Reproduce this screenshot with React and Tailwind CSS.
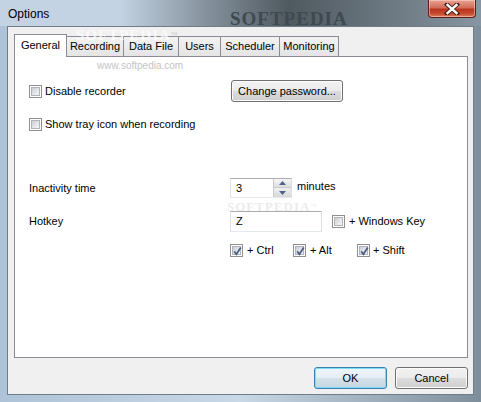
import React from "react";

const font = { fontFamily: '"Liberation Sans", Arial, sans-serif' };
const serif = { fontFamily: '"Liberation Serif", serif' };

function Check({ checked }) {
  return (
    <span className="relative flex h-[13px] w-[13px] shrink-0 items-center justify-center border border-[#8f8f8f] bg-white">
      <span className="h-[9px] w-[9px] border border-[#b0b4ba] bg-[linear-gradient(135deg,#c9ced5_0%,#e6e8eb_60%,#f7f7f7_100%)]" />
      {checked && (
        <svg className="absolute left-[1px] top-[1px]" width="11" height="11" viewBox="0 0 11 11">
          <path d="M2.2 5.4 L4.4 8.2 L8.8 1.6" fill="none" stroke="#4a5d86" strokeWidth="1.8" />
        </svg>
      )}
    </span>
  );
}

function CheckLabel({ checked, children, className = "" }) {
  return (
    <div className={"flex items-center gap-[3px] " + className}>
      <Check checked={checked} />
      <span className="text-[11px] leading-[13px] text-black">{children}</span>
    </div>
  );
}

function Button({ children, def, className = "" }) {
  return (
    <div
      className={
        "flex items-center justify-center rounded-[3px] border text-[11px] text-black " +
        (def
          ? "border-[#3c7fb1] bg-[linear-gradient(#eef6fb_0%,#e4eef5_50%,#d3e1ea_50%,#c6d6e1_100%)] shadow-[inset_0_0_0_1px_#7ddcfa] "
          : "border-[#707070] bg-[linear-gradient(#f2f2f2_0%,#ebebeb_50%,#dddddd_50%,#cfcfcf_100%)] shadow-[inset_0_0_0_1px_#fbfbfb] ") +
        className
      }
    >
      {children}
    </div>
  );
}

function Tab({ label, selected, w, first }) {
  return (
    <div
      className={
        "flex items-center justify-center border-t border-r border-[#898c95] text-[11px] text-black " +
        (first ? "border-l " : "") +
        (selected
          ? "relative z-10 -mb-px h-[23px] bg-white pb-[2px]"
          : "h-[20px] bg-[linear-gradient(#f3f3f3,#e4e4e4)]")
      }
      style={{ width: w }}
    >
      {label}
    </div>
  );
}

export default function App() {
  return (
    <div className="h-[402px] w-[481px] overflow-hidden bg-[#b9cbdd]" style={font}>
      <div className="flex h-[402px] w-[481px] flex-col bg-linear-to-r from-[#aec3d8] via-[#c8d8e7] to-[#7f8e9b]">
        {/* title bar */}
        <div className="flex h-[26px] bg-linear-to-r from-[#c3d3e3] from-25% via-[#4f5960] via-60% to-[#8796a2]">
          <span className="w-[230px] pl-[8px] pt-[6px] text-[12px] leading-[16px] text-black">
            Options
          </span>
          <span className="w-[198px] pt-[9px] text-[19px] font-bold leading-[20px] tracking-[1px] text-[#3f4950]" style={serif}>
            SOFTPEDIA
          </span>
          <div className="flex h-[18px] w-[48px] items-center justify-center rounded-b-[4px] border border-t-0 border-[#5a1f1a] bg-[linear-gradient(#e8a394_0%,#d26d58_45%,#b8341c_55%,#c44a2e_80%,#e07d5c_100%)] shadow-[inset_0_0_0_1px_rgba(255,220,210,0.5)]">
            <svg width="16" height="12" viewBox="0 0 16 12">
              <path d="M3 1.5 L13 10.5 M13 1.5 L3 10.5" stroke="#3a1a14" strokeWidth="4.2" strokeLinecap="square" />
              <path d="M3.5 2 L12.5 10 M12.5 2 L3.5 10" stroke="#ffffff" strokeWidth="2.4" strokeLinecap="square" />
            </svg>
          </div>
        </div>

        {/* client area */}
        <div className="mx-[7px] border border-[#6e7d8a] bg-[#f0f0f0]">
          <div className="relative flex h-[367px] flex-col pl-[6px] pr-[5px] pt-[7px]">
            <span className="pointer-events-none absolute left-[68px] top-0 text-[15px] font-bold leading-[16px] tracking-[1px] text-white/70" style={serif}>
              SOFTPEDIA<sup className="text-[7px] font-normal text-[#c8c8c8]">™</sup>
            </span>
            {/* tabs */}
            <div className="flex h-[22px] items-end">
              <Tab label="General" selected first w={53} />
              <Tab label="Recording" w={57} />
              <Tab label="Data File" w={55} />
              <Tab label="Users" w={42} />
              <Tab label="Scheduler" w={59} />
              <Tab label="Monitoring" w={59} />
            </div>
            {/* panel */}
            <div className="relative flex h-[302px] flex-col border border-[#898c95] bg-white pl-[14px] pt-[23px]">
              <span className="pointer-events-none absolute left-[82px] top-[3px] text-[10px] leading-[12px] text-[#c4c4c4]">
                www.softpedia.com
              </span>
              <span className="pointer-events-none absolute left-[212px] top-[143px] text-[13px] font-bold leading-[14px] tracking-[1px] text-[#ececec]" style={serif}>
                SOFTPEDIA<sup className="text-[6px] font-normal">™</sup>
              </span>

              <div className="flex h-[22px] items-center">
                <div className="w-[202px]">
                  <CheckLabel>Disable recorder</CheckLabel>
                </div>
                <Button className="h-[22px] w-[112px]">Change password...</Button>
              </div>

              <CheckLabel className="mt-[16px] h-[13px]">Show tray icon when recording</CheckLabel>

              <div className="mt-[47px] flex h-[20px] items-center">
                <span className="w-[201px] text-[11px] text-black">Inactivity time</span>
                <div className="flex h-[20px] w-[62px] border border-[#abadb3] border-b-[#e3e9ef] border-l-[#e2e3ea] border-r-[#dbdfe6] bg-white">
                  <span className="flex-1 pl-[5px] text-[11px] leading-[18px] text-black">3</span>
                  <div className="flex w-[18px] flex-col border-l border-[#c8ccd2]">
                    <div className="flex h-[9px] items-center justify-center border-b border-[#c8ccd2] bg-[linear-gradient(#f6f6f6,#dedede)]">
                      <svg width="7" height="4" viewBox="0 0 7 4"><path d="M0 4 L3.5 0 L7 4 Z" fill="#4e6386" /></svg>
                    </div>
                    <div className="flex flex-1 items-center justify-center bg-[linear-gradient(#f0f0f0,#d8d8d8)]">
                      <svg width="7" height="4" viewBox="0 0 7 4"><path d="M0 0 L7 0 L3.5 4 Z" fill="#4e6386" /></svg>
                    </div>
                  </div>
                </div>
                <span className="-mt-[4px] ml-[5px] text-[11px] text-black">minutes</span>
              </div>

              <div className="mt-[13px] flex h-[21px] items-center">
                <span className="w-[201px] text-[11px] text-black">Hotkey</span>
                <div className="flex h-[21px] w-[92px] items-center border border-[#abadb3] border-b-[#e3e9ef] border-l-[#e2e3ea] border-r-[#dbdfe6] bg-white pl-[5px] text-[11px] text-black">
                  Z
                </div>
                <CheckLabel className="ml-[10px] gap-[4px]">+ Windows Key</CheckLabel>
              </div>

              <div className="mt-[12px] flex h-[13px] items-center pl-[201px]">
                <CheckLabel checked className="w-[63px] gap-[4px]">+ Ctrl</CheckLabel>
                <CheckLabel checked className="w-[64px] gap-[4px]">+ Alt</CheckLabel>
                <CheckLabel checked className="gap-[3px]">+ Shift</CheckLabel>
              </div>
            </div>

            {/* bottom buttons */}
            <div className="mt-[9px] flex justify-end gap-[8px]">
              <Button def className="h-[22px] w-[73px]">OK</Button>
              <Button className="h-[22px] w-[73px]">Cancel</Button>
            </div>
          </div>
        </div>
      </div>
    </div>
  );
}
